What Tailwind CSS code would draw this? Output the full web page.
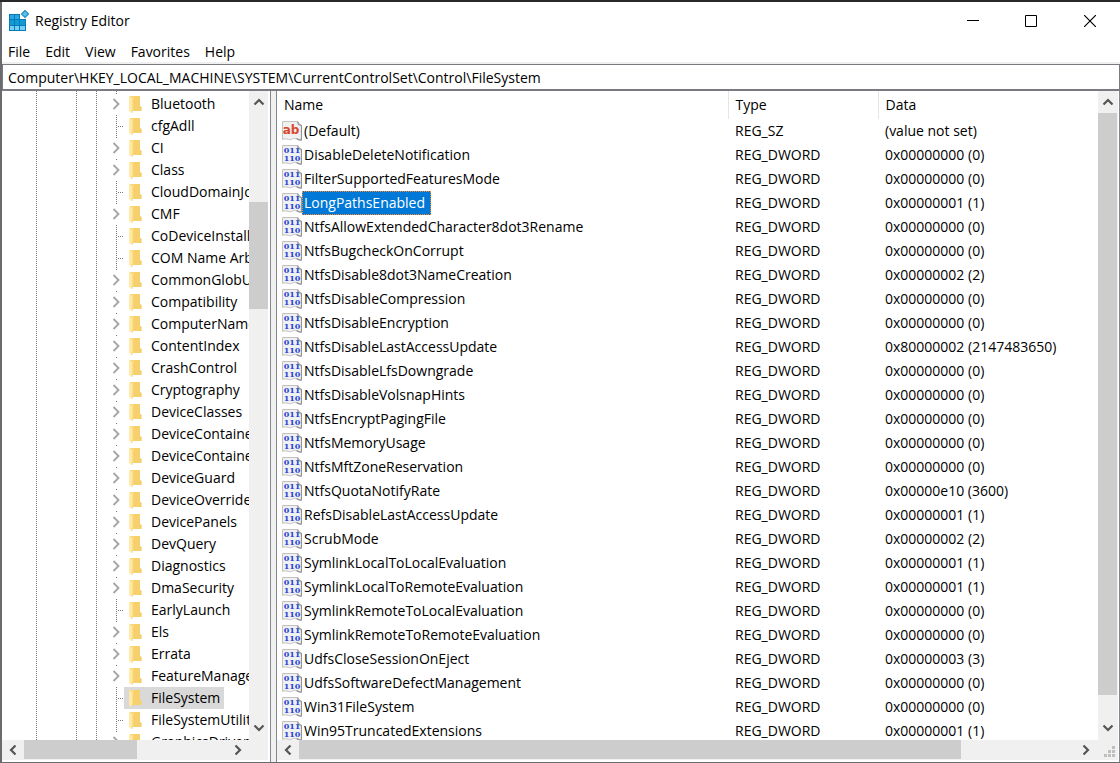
<!DOCTYPE html>
<html lang="en">
<head>
<meta charset="utf-8">
<meta name="viewport" content="width=device-width, initial-scale=1">
<title>Registry Editor</title>
<script src="https://cdn.jsdelivr.net/npm/@tailwindcss/browser@4"></script>
</head>
<body class="h-screen overflow-hidden bg-[#2a282b] pt-0.5 text-sm text-black font-['Open_Sans','Noto_Sans',sans-serif]">
<svg class="hidden">
  <symbol id="up" viewBox="0 0 12 8"><path d="M1.5 6.5 6 2l4.500 4.500" fill="none" stroke="#555" stroke-width="2.200"/></symbol>
  <symbol id="down" viewBox="0 0 12 8"><path d="M1.500 1.500 6 6l4.500-4.500" fill="none" stroke="#555" stroke-width="2.200"/></symbol>
  <symbol id="left" viewBox="0 0 8 12"><path d="M6.500 1.500 2 6l4.500 4.500" fill="none" stroke="#555" stroke-width="2.200"/></symbol>
  <symbol id="right" viewBox="0 0 8 12"><path d="M1.500 1.500 6 6l-4.500 4.500" fill="none" stroke="#555" stroke-width="2.200"/></symbol>
  <symbol id="expand" viewBox="0 0 8 12"><path d="M1.500 1 6.500 6l-5 5" fill="none" stroke="#a6a6a6" stroke-width="1.900"/></symbol>
  <symbol id="folder" viewBox="0 0 13 17">
    <path d="M1 0h10v10l1.500 1v4H3z" fill="#fbd978"/><path d="M5 0h6v10l1.500 1v4H5z" fill="#f6d06c"/>
    <path d="M0 0l4 3v10l-1 4-3-2z" fill="#ffe9a6"/><path d="M4 3v10l-1 4" fill="none" stroke="#efc760" stroke-width=".6"/>
  </symbol>
  <symbol id="page" viewBox="0 0 20 20">
    <path d="M.5.5h15l4 4v14c-3 1-4-1-7-1s-3 2-6 1-3-1-6 0z" fill="#f0f0f1" stroke="#c2c2c4"/>
    <path d="M15.500.5l1 3 3 1v14.500c-2 .5-3-.5-5-1.500" fill="none" stroke="#939396" stroke-width="1.200"/>
  </symbol>
</svg>

<div class="flex h-full flex-col border-b border-l-2 border-[#6b6a6e] bg-white">
  <header class="flex h-[37px] shrink-0 items-center pl-[7px]">
    <svg class="mr-1 size-[22px]" viewBox="0 0 22 22" aria-hidden="true">
      <path d="M0 4h17v17H0z" fill="#087ab8"/>
      <path d="M1 5h4v4H1zM6 5h4v4H6z" fill="#26a8e0"/><path d="M1 10h4v5H1zM6 10h4v5H6zM11 10h5v5h-5z" fill="#109bd5"/>
      <path d="M1 16h4v4H1zM6 16h4v4H6zM11 16h5v4h-5z" fill="#74d0f6"/>
      <path d="M11 3h7v6h-7z" fill="#fff"/>
      <path d="M16 .5 19.500 4 16 7.500 12.500 4z" fill="#5fc0ec" stroke="#218fc4" stroke-width="1.200"/>
    </svg>
    <h1 class="flex-1">Registry Editor</h1>
    <button aria-label="Minimize" class="flex h-9 w-14 items-center justify-center"><svg class="size-3" viewBox="0 0 12 12"><path d="M0 5.500h12" stroke="#000"/></svg></button>
    <button aria-label="Maximize" class="flex h-9 w-[59px] items-center justify-center"><svg class="size-3" viewBox="0 0 12 12"><path d="M.5.5h11v11H.5z" fill="none" stroke="#000"/></svg></button>
    <button aria-label="Close" class="flex h-9 w-15 items-center justify-center"><svg class="size-3" viewBox="0 0 12 12"><path d="M0 0l12 12M12 0 0 12" stroke="#000" stroke-width="1.200"/></svg></button>
  </header>
  <nav class="flex h-[25px] shrink-0 items-center gap-[15px] border-b-2 border-[#f0f0f0] pl-1.5 pt-0.5">
    <button>File</button><button>Edit</button><button>View</button><button>Favorites</button><button>Help</button>
  </nav>
  <input aria-label="Address" class="h-[27px] w-full shrink-0 border border-b-2 border-[#7a7a80] bg-white pl-[5px] outline-none" value="Computer\HKEY_LOCAL_MACHINE\SYSTEM\CurrentControlSet\Control\FileSystem">

  <main class="flex min-h-0 flex-1 bg-[#f0f0f0]">
    <section aria-label="Keys" class="flex w-[269px] shrink-0 flex-col border-r border-[#828790] bg-white pb-0.5 pr-0.5">
      <div class="flex min-h-0 flex-1">
        <div class="relative min-w-0 flex-1 overflow-hidden">
          <div class="absolute inset-y-0 left-[34px] w-px bg-[repeating-linear-gradient(#777_0_1px,#fff_1px_2px)]"></div>
          <div class="absolute inset-y-0 left-[74px] w-px bg-[repeating-linear-gradient(#777_0_1px,#fff_1px_2px)]"></div>
          <div class="absolute inset-y-0 left-[94px] w-px bg-[repeating-linear-gradient(#777_0_1px,#fff_1px_2px)]"></div>
          <div class="absolute inset-y-0 left-[114px] w-px bg-[repeating-linear-gradient(#777_0_1px,#fff_1px_2px)]"></div>
          <ul id="tree" class="relative pl-[108px] pt-0.5"></ul>
        </div>
        <div class="flex w-[19px] shrink-0 flex-col items-center bg-[#f0f0f0]">
          <button aria-label="Scroll up" class="flex h-[22px] w-full items-center justify-center"><svg class="h-2 w-3"><use href="#up"/></svg></button>
          <div class="flex w-full flex-1 flex-col"><div class="h-[89px]"></div><div class="h-[107px] bg-[#cdcdcd]"></div></div>
          <button aria-label="Scroll down" class="flex h-6 w-full items-center justify-center"><svg class="h-2 w-3"><use href="#down"/></svg></button>
        </div>
      </div>
      <div class="flex h-5 shrink-0 bg-[#f0f0f0] pr-[18px]">
        <button aria-label="Scroll left" class="flex w-[22px] items-center justify-center"><svg class="h-3 w-2"><use href="#left"/></svg></button>
        <div class="flex-1"><div class="h-[19px] w-[113px] bg-[#cdcdcd]"></div></div>
        <button aria-label="Scroll right" class="flex w-6 items-center justify-center"><svg class="h-3 w-2"><use href="#right"/></svg></button>
      </div>
    </section>
    <section aria-label="Values" class="ml-[5px] flex min-w-0 flex-1 flex-col border-x border-[#828790] bg-white pb-0.5 pr-px">
      <div class="flex min-h-0 flex-1">
        <div class="min-w-0 flex-1 overflow-hidden">
          <table class="w-full table-fixed border-collapse text-left">
            <thead><tr class="h-7">
              <th class="w-[451px] p-0 pl-[7px] font-normal">Name</th>
              <th class="w-[150px] border-l border-[#e5e5e5] p-0 pl-[7px] font-normal">Type</th>
              <th class="border-l border-[#e5e5e5] p-0 pl-[7px] font-normal">Data</th>
            </tr></thead>
            <tbody id="values"></tbody>
          </table>
        </div>
        <div class="flex w-5 shrink-0 flex-col bg-[#f0f0f0]">
          <button aria-label="Scroll up" class="flex h-[22px] items-center justify-center"><svg class="h-2 w-3"><use href="#up"/></svg></button>
          <div class="flex-1"><div class="h-[582px] w-[19px] bg-[#cdcdcd]"></div></div>
          <button aria-label="Scroll down" class="flex h-6 items-center justify-center"><svg class="h-2 w-3"><use href="#down"/></svg></button>
        </div>
      </div>
      <div class="flex h-5 shrink-0 bg-[#f0f0f0]">
        <button aria-label="Scroll left" class="flex w-[22px] items-center justify-center"><svg class="h-3 w-2"><use href="#left"/></svg></button>
        <div class="flex-1"><div class="h-[19px] w-[662px] bg-[#cdcdcd]"></div></div>
        <button aria-label="Scroll right" class="flex w-6 items-center justify-center"><svg class="h-3 w-2"><use href="#right"/></svg></button>
        <div class="flex w-5 items-end justify-end pb-0.5 pr-0.5"><svg class="size-3" viewBox="0 0 12 12"><path d="M8 0h3v3H8zM4 4h3v3H4zM8 4h3v3H8zM0 8h3v3H0zM4 8h3v3H4zM8 8h3v3H8z" fill="#bfbfbf"/></svg></div>
      </div>
    </section>
  </main>
</div>

<script>
// A leading "-" marks a key without subkeys.
const keys = ["Bluetooth","-cfgAdll","CI","Class","-CloudDomainJoin","CMF","-CoDeviceInstallers","-COM Name Arbiter","CommonGlobUserSettings","Compatibility","ComputerName","ContentIndex","CrashControl","Cryptography","DeviceClasses","DeviceContainerPropertyUpdateEvents","DeviceContainers","DeviceGuard","DeviceOverrides","DevicePanels","DevQuery","Diagnostics","DmaSecurity","-EarlyLaunch","Els","Errata","FeatureManagement","-FileSystem","-FileSystemUtilities","GraphicsDrivers"];
document.getElementById("tree").innerHTML = keys.map(k => {
  const leaf = k[0] === "-", name = leaf ? k.slice(1) : k;
  const branch = leaf
    ? '<span class="flex w-3.5 shrink-0 justify-end"><span class="h-px w-1.5 bg-[repeating-linear-gradient(90deg,#777_0_1px,#fff_1px_2px)]"></span></span>'
    : '<button aria-label="Expand" class="flex h-[19px] w-3.5 shrink-0 items-center bg-white"><svg class="ml-0.5 h-3 w-2"><use href="#expand"/></svg></button>';
  const sel = name === "FileSystem" ? "flex h-full shrink-0 items-center bg-[#d9d9d9] pl-[5px] pr-1" : "flex h-full shrink-0 items-center pl-[5px] pr-1";
  return `<li class="flex h-[22px] items-center whitespace-nowrap">${branch}<span class="${sel}"><svg class="mr-[9px] h-[17px] w-[13px] shrink-0"><use href="#folder"/></svg>${name}</span></li>`;
}).join("");

const values = [["(Default)","(value not set)"],["DisableDeleteNotification","0x00000000 (0)"],["FilterSupportedFeaturesMode","0x00000000 (0)"],["LongPathsEnabled","0x00000001 (1)"],["NtfsAllowExtendedCharacter8dot3Rename","0x00000000 (0)"],["NtfsBugcheckOnCorrupt","0x00000000 (0)"],["NtfsDisable8dot3NameCreation","0x00000002 (2)"],["NtfsDisableCompression","0x00000000 (0)"],["NtfsDisableEncryption","0x00000000 (0)"],["NtfsDisableLastAccessUpdate","0x80000002 (2147483650)"],["NtfsDisableLfsDowngrade","0x00000000 (0)"],["NtfsDisableVolsnapHints","0x00000000 (0)"],["NtfsEncryptPagingFile","0x00000000 (0)"],["NtfsMemoryUsage","0x00000000 (0)"],["NtfsMftZoneReservation","0x00000000 (0)"],["NtfsQuotaNotifyRate","0x00000e10 (3600)"],["RefsDisableLastAccessUpdate","0x00000001 (1)"],["ScrubMode","0x00000002 (2)"],["SymlinkLocalToLocalEvaluation","0x00000001 (1)"],["SymlinkLocalToRemoteEvaluation","0x00000001 (1)"],["SymlinkRemoteToLocalEvaluation","0x00000000 (0)"],["SymlinkRemoteToRemoteEvaluation","0x00000000 (0)"],["UdfsCloseSessionOnEject","0x00000003 (3)"],["UdfsSoftwareDefectManagement","0x00000000 (0)"],["Win31FileSystem","0x00000000 (0)"],["Win95TruncatedExtensions","0x00000001 (1)"]];
document.getElementById("values").innerHTML = values.map(([n, d], i) => {
  const glyph = i === 0
    ? '<text x="9" y="13" text-anchor="middle" class="fill-[#d9472f] text-[12px] font-bold font-[DejaVu_Sans]">ab</text>'
    : '<g class="fill-[#2346d8] text-[8px] font-bold font-[DejaVu_Serif]"><text x="10" y="8" text-anchor="middle">011</text><text x="10" y="16" text-anchor="middle">110</text></g>';
  const label = n === "LongPathsEnabled"
    ? "flex h-6 items-center border border-dotted border-[#ff8728] bg-[#0078d7] pl-px pr-[5px] text-white"
    : "flex h-6 items-center pl-0.5";
  return `<tr class="h-6"><td class="p-0"><div class="flex h-6 items-center pl-[5px]"><svg class="size-5 shrink-0" viewBox="0 0 20 20" aria-hidden="true"><use href="#page"/>${glyph}</svg><span class="${label}">${n}</span></div></td><td class="p-0 pl-[7px]">${i === 0 ? "REG_SZ" : "REG_DWORD"}</td><td class="whitespace-nowrap p-0 pl-[7px]">${d}</td></tr>`;
}).join("");
</script>
</body>
</html>
